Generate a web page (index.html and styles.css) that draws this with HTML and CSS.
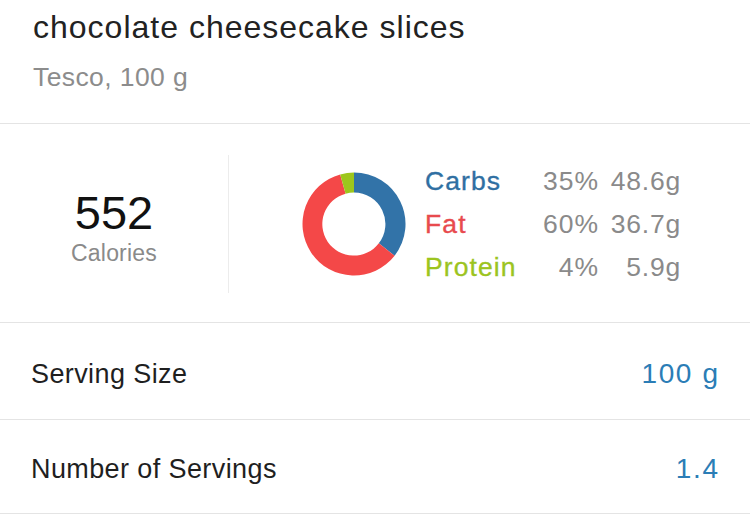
FILE: index.html
```
<!DOCTYPE html>
<html>
<head>
<meta charset="utf-8">
<link rel="stylesheet" href="styles.css">
</head>
<body>
<div class="page">
  <header class="header">
    <div class="title">chocolate cheesecake slices</div>
    <div class="subtitle">Tesco, 100 g</div>
  </header>
  <section class="nutrition">
    <div class="calories">
      <div class="cal-value">552</div>
      <div class="cal-label">Calories</div>
    </div>
    <div class="vdivider"></div>
    <div class="macros">
      <svg class="donut" width="104" height="104" viewBox="0 0 104 104">
        <g transform="translate(52 52)">
          <path d="M0,-51.5 A51.5,51.5 0 0 1 40.6,31.7 L24.8,19.3 A31.5,31.5 0 0 0 0,-31.5 Z" fill="#3273a8"/>
          <path d="M40.6,31.7 A51.5,51.5 0 1 1 -13.8,-49.6 L-8.4,-30.3 A31.5,31.5 0 1 0 24.8,19.3 Z" fill="#f44848"/>
          <path d="M-13.8,-49.6 A51.5,51.5 0 0 1 0,-51.5 L0,-31.5 A31.5,31.5 0 0 0 -8.4,-30.3 Z" fill="#9dc71d"/>
        </g>
      </svg>
      <div class="macro-table">
        <span class="m-label carbs">Carbs</span><span class="m-pct">35%</span><span class="m-g">48.6g</span>
        <span class="m-label fat">Fat</span><span class="m-pct">60%</span><span class="m-g">36.7g</span>
        <span class="m-label protein">Protein</span><span class="m-pct">4%</span><span class="m-g">5.9g</span>
      </div>
    </div>
  </section>
  <div class="row row-first">
    <span class="row-label">Serving Size</span>
    <span class="row-value">100 g</span>
  </div>
  <div class="row row-second">
    <span class="row-label">Number of Servings</span>
    <span class="row-value">1.4</span>
  </div>
</div>
</body>
</html>
```
FILE: styles.css
```
* { box-sizing: border-box; }
html, body { margin: 0; padding: 0; background: #fff; }
body {
  font-family: "Liberation Sans", Arial, sans-serif;
  width: 750px;
  height: 516px;
  overflow: hidden;
}
.header {
  height: 124px;
  padding: 11px 0 0 33px;
  border-bottom: 1px solid #e4e4e4;
}
.title {
  font-size: 32px;
  letter-spacing: 1px;
  line-height: 1;
  color: #222;
}
.subtitle {
  margin-top: 21px;
  font-size: 26.5px;
  letter-spacing: 0.4px;
  line-height: 1;
  color: #8c8c8c;
}
.nutrition {
  display: flex;
  height: 199px;
  padding-top: 31px;
  border-bottom: 1px solid #e4e4e4;
}
.calories {
  width: 228px;
  height: 138px;
  display: flex;
  flex-direction: column;
  align-items: center;
  padding-top: 34px;
}
.cal-value {
  font-size: 47px;
  line-height: 1;
  color: #111;
}
.cal-label {
  margin-top: 6px;
  font-size: 23px;
  letter-spacing: 0.2px;
  line-height: 1;
  color: #8a8a8a;
}
.vdivider {
  width: 1px;
  height: 138px;
  background: #ececec;
}
.macros {
  display: flex;
  align-items: flex-start;
  padding-left: 73px;
}
.donut {
  display: block;
  margin-top: 17px;
}
.macro-table {
  margin-left: 19px;
  margin-top: 5px;
  display: grid;
  grid-template-columns: 93px 81px 82px;
  font-size: 26.5px;
  line-height: 43px;
}
.m-label {
  white-space: nowrap;
  letter-spacing: 1.1px;
  -webkit-text-stroke: 0.35px currentColor;
}
.m-pct, .m-g { text-align: right; color: #8a8a8a; letter-spacing: 1px; }
.m-g { letter-spacing: 0.8px; }
.carbs { color: #2f6fa2; }
.fat { color: #e84a4e; }
.protein { color: #9cc41f; }
.row {
  display: flex;
  justify-content: space-between;
  align-items: center;
  padding: 0 32px 0 31px;
  border-bottom: 1px solid #e4e4e4;
  font-size: 27px;
}
.row-first { height: 97px; padding-top: 6px; }
.row-second { height: 94px; padding-top: 5px; }
.row-label { color: #1f1f1f; letter-spacing: 0.4px; }
.row-value { color: #2b7db6; font-size: 28px; letter-spacing: 1.6px; margin-right: -1.6px; }
```
